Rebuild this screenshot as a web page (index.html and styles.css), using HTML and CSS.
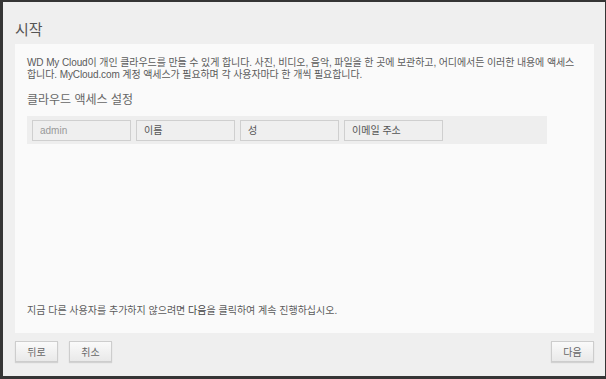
FILE: index.html
```html
<!DOCTYPE html>
<html lang="ko">
<head>
  <meta charset="UTF-8">
  <title>시작</title>
  <link rel="stylesheet" href="styles.css">
</head>
<body>
 <div class="window">
   <h1 class="title">시작</h1>

   <!-- main panel -->
   <div class="panel">
     <p class="intro">WD My Cloud이 개인 클라우드를 만들 수 있게 합니다. 사진, 비디오, 음악, 파일을 한 곳에 보관하고, 어디에서든 이러한 내용에 액세스합니다. MyCloud.com 계정 액세스가 필요하며 각 사용자마다 한 개씩 필요합니다.</p>
     <h2 class="section">클라우드 액세스 설정</h2>
     <div class="user-row">
       <input class="field muted" type="text" value="admin" readonly>
       <input class="field" type="text" placeholder="이름">
       <input class="field" type="text" placeholder="성">
       <input class="field" type="text" placeholder="이메일 주소">
     </div>
     <p class="hint">지금 다른 사용자를 추가하지 않으려면 <b>다음</b>을 클릭하여 계속 진행하십시오.</p>
   </div>

   <div class="footer">
     <button class="btn">뒤로</button>
     <button class="btn">취소</button>
     <button class="btn next">다음</button>
   </div>
 </div>
</body>
</html>
```

FILE: styles.css
```css
:root{--bg:#efefef;--panel:#fafafa;--txt:#5a5a5a;--line:#cfcfcf;--frame:#353535}
*{box-sizing:border-box;margin:0;padding:0}
body{font-family:'Liberation Sans','Noto Sans CJK KR',sans-serif;background:var(--frame);color:var(--txt)}
.window{height:379px;background:var(--bg);border:solid var(--frame);border-width:2px 1px 3px 3px;padding:0 11px 0 12px;display:flex;flex-direction:column}
.title{font-size:15px;font-weight:normal;line-height:20px;padding:18px 0 4px;color:#555}
.panel{flex:1;background:var(--panel);padding:13px 12px 15px;display:flex;flex-direction:column}
.intro{font-size:10px;line-height:12px;letter-spacing:-.1px}
.section{font-size:12px;font-weight:normal;line-height:16px;margin-top:11px;color:#666}
.user-row{display:flex;gap:5px;width:520px;background:#eeeeee;padding:4px 5px 3px;margin-top:8px}
.field{width:99px;height:21px;border:1px solid var(--line);background:#efefef;font-family:inherit;font-size:10px;padding:0 7px;color:#555}
.field::placeholder{color:#555}
.field.muted{color:#999}
.hint{margin-top:auto;font-size:10px;line-height:14px}
.hint b{font-weight:normal;color:#444}
.footer{display:flex;gap:11px;padding:8px 0 0 0;height:43px}
.btn{width:43px;height:21px;border:1px solid #cdcdcd;background:linear-gradient(#fafafa,#e9e9e9);box-shadow:0 1px 1px rgba(0,0,0,.12);font-family:inherit;font-size:10px;color:#666;cursor:pointer}
.btn.next{margin-left:auto}
```
